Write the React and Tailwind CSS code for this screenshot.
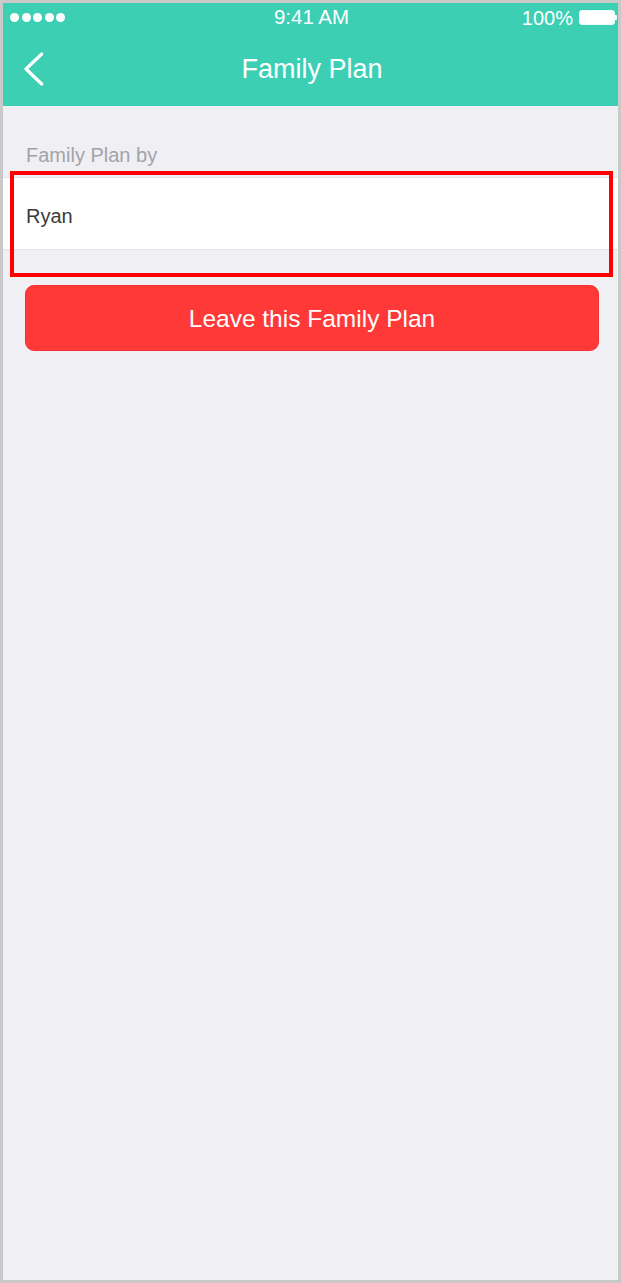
import React from "react";

export default function App() {
  return (
    <div
      className="w-[621px] h-[1283px] border-[3px] border-[#c9c9c9] bg-[#efeff4] flex flex-col overflow-hidden"
      style={{ fontFamily: '"Liberation Sans", Arial, sans-serif' }}
    >
      <div className="bg-[#3dcfb3] flex flex-col">
        <div className="h-[32px] flex items-center justify-between pl-[7px] pr-[1px] pb-[3px] relative text-white">
          <div className="flex items-center gap-[2.5px]">
            <div className="w-[9px] h-[9px] rounded-full bg-white" />
            <div className="w-[9px] h-[9px] rounded-full bg-white" />
            <div className="w-[9px] h-[9px] rounded-full bg-white" />
            <div className="w-[9px] h-[9px] rounded-full bg-white" />
            <div className="w-[9px] h-[9px] rounded-full bg-white" />
          </div>
          <div className="absolute left-0 right-0 top-0 bottom-[3px] flex items-center justify-center text-[20.5px] leading-none pointer-events-none pl-[2px]">
            9:41 AM
          </div>
          <div className="flex items-center">
            <span className="text-[20px] leading-none mr-[6px]">100%</span>
            <div className="flex items-center">
              <div className="w-[36px] h-[15px] rounded-[3px] border border-[#e8fff9] bg-white" />
              <div className="w-[2px] h-[5px] bg-white rounded-r-[1px]" />
            </div>
          </div>
        </div>
        <div className="h-[71px] relative flex items-center justify-center text-white">
          <svg
            className="absolute left-[20px] top-[17px]"
            width="24"
            height="36"
            viewBox="0 0 24 36"
            fill="none"
          >
            <path
              d="M18.7 2 L3 17 L18.7 32"
              stroke="white"
              strokeWidth="3.2"
              strokeLinecap="round"
              strokeLinejoin="round"
            />
          </svg>
          <span className="text-[27px] leading-none mb-[3px] pl-[3px]">Family Plan</span>
        </div>
      </div>

      <div className="pt-[39px] pl-[23px] text-[20px] leading-none text-[#a3a3a9]">
        Family Plan by
      </div>

      <div className="relative mt-[12px]">
        <div className="h-[73px] bg-white border-y border-[#e3e3e8] flex items-center pl-[23px] pt-[5px] text-[20px] leading-none text-[#3b3b3b]">
          Ryan
        </div>
        <div className="absolute left-[7px] top-[-6px] w-[603px] h-[106px] border-[4.5px] border-[#ff0000]" />
      </div>

      <button className="mt-[35px] ml-[22px] w-[574px] h-[66px] rounded-[9px] bg-[#ff3838] border border-[#f53030] flex items-center justify-center pt-[3px] text-white text-[24.5px] leading-none">
        Leave this Family Plan
      </button>
    </div>
  );
}
